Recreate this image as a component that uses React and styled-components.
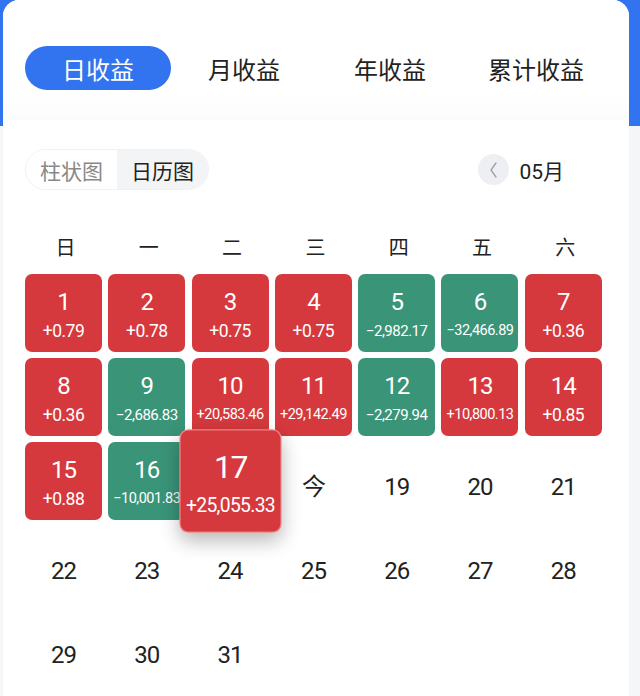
import React from "react";
import styled, { createGlobalStyle, css } from "styled-components";

const GlobalStyle = createGlobalStyle`
  html, body {
    margin: 0;
    padding: 0;
    background: #f5f6f8;
  }
  body {
    font-family: Roboto, "Noto Sans CJK SC", "Noto Sans", sans-serif;
    color: #222;
  }
`;

const Page = styled.div`
  height: 696px;
  overflow: hidden;
  padding: 0 11px 0 3px;
  background: linear-gradient(#3273ef 0, #3273ef 126px, #f5f6f8 126px);
`;

const Card = styled.div`
  min-height: 696px;
  background: #fff;
  border-radius: 16px 16px 0 0;
  overflow: hidden;
`;

const Tabs = styled.div`
  display: grid;
  grid-template-columns: repeat(4, 146px);
  padding: 46px 22px 30px;
  background: linear-gradient(#fff 80%, #fafbfc);
`;

const Tab = styled.div`
  height: 44px;
  border-radius: 22px;
  display: flex;
  align-items: center;
  justify-content: center;
  font-family: "Noto Sans CJK SC", sans-serif;
  font-size: 24px;
  color: #222;
  ${({ $active }) =>
    $active &&
    css`
      background: #3273ef;
      color: #fff;
    `}
`;

const Body = styled.div`
  padding: 29px 0 0 22px;
`;

const Toolbar = styled.div`
  display: flex;
  align-items: center;
  justify-content: space-between;
  width: 580px;
`;

const Toggle = styled.div`
  display: flex;
  height: 41px;
  border-radius: 21px;
  border: 1px solid #f0f1f3;
  overflow: hidden;
  box-sizing: border-box;
`;

const Segment = styled.div`
  display: flex;
  align-items: center;
  padding: 0 14px;
  font-family: "Noto Sans CJK SC", sans-serif;
  font-size: 21px;
  color: ${({ $active }) => ($active ? "#222" : "#888")};
  background: ${({ $active }) => ($active ? "#f3f4f6" : "#fff")};
`;

const MonthNav = styled.div`
  display: flex;
  align-items: center;
  gap: 10px;
`;

const ArrowButton = styled.div`
  width: 31px;
  height: 31px;
  border-radius: 50%;
  background: #eeeff2;
  display: flex;
  align-items: center;
  justify-content: center;
  visibility: ${({ $hidden }) => ($hidden ? "hidden" : "visible")};
`;

const MonthLabel = styled.div`
  font-size: 21px;
  color: #222;
  font-family: Roboto, "Noto Sans CJK SC", sans-serif;
`;

const WeekRow = styled.div`
  display: grid;
  grid-template-columns: repeat(7, 77px);
  column-gap: 6.3px;
  margin-top: 42px;
  height: 30px;
`;

const WeekDay = styled.div`
  text-align: center;
  font-family: "Noto Sans CJK SC", sans-serif;
  font-size: 20px;
  line-height: 30px;
  padding-left: 4px;
`;

const Grid = styled.div`
  display: grid;
  grid-template-columns: repeat(7, 77px);
  grid-auto-rows: 78px;
  gap: 6px 6.3px;
  margin-top: 12px;
`;

const Cell = styled.div`
  position: relative;
  border-radius: 7px;
  display: flex;
  flex-direction: column;
  align-items: center;
  color: #fff;
  white-space: nowrap;
  ${({ $tone }) =>
    $tone === "up" &&
    css`
      background: #d5393d;
    `}
  ${({ $tone }) =>
    $tone === "down" &&
    css`
      background: #3a9478;
    `}
  ${({ $selected }) =>
    $selected &&
    css`
      z-index: 2;
      transform: scale(1.33);
      box-shadow: 0 6px 14px rgba(0, 0, 0, 0.28);
      border: 1px solid rgba(255, 180, 180, 0.6);
      box-sizing: border-box;
    `}
`;

const DayNum = styled.div`
  margin-top: 14px;
  font-size: 24px;
  line-height: 28px;
  letter-spacing: -1px;
`;

const DayValue = styled.div`
  margin-top: 5px;
  font-size: ${({ $size }) => $size}px;
  line-height: 20px;
  letter-spacing: -0.5px;
`;

const PlainDay = styled.div`
  margin-top: 31px;
  font-size: 24px;
  line-height: 28px;
  letter-spacing: -1px;
  color: #222;
  font-family: Roboto, "Noto Sans CJK SC", sans-serif;
`;

const Chevron = ({ dir }) => (
  <svg width="12" height="18" viewBox="0 0 12 18">
    <polyline
      points={dir === "left" ? "8,2 3,9 8,16" : "4,2 9,9 4,16"}
      fill="none"
      stroke="#a0a0a5"
      strokeWidth="1.3"
      strokeLinecap="round"
      strokeLinejoin="round"
    />
  </svg>
);

const days = {
  1: "+0.79",
  2: "+0.78",
  3: "+0.75",
  4: "+0.75",
  5: "−2,982.17",
  6: "−32,466.89",
  7: "+0.36",
  8: "+0.36",
  9: "−2,686.83",
  10: "+20,583.46",
  11: "+29,142.49",
  12: "−2,279.94",
  13: "+10,800.13",
  14: "+0.85",
  15: "+0.88",
  16: "−10,001.83",
  17: "+25,055.33",
};

const weekDays = ["日", "一", "二", "三", "四", "五", "六"];
const tabs = ["日收益", "月收益", "年收益", "累计收益"];

const valueSize = (v) => (v.length <= 6 ? 17.5 : v.length === 9 ? 15 : 14.5);

export default function App() {
  const cells = [];
  for (let d = 1; d <= 31; d++) {
    const v = days[d];
    if (v) {
      cells.push(
        <Cell key={d} $tone={v.startsWith("+") ? "up" : "down"} $selected={d === 17}>
          <DayNum>{d}</DayNum>
          <DayValue $size={valueSize(v)}>{v}</DayValue>
        </Cell>
      );
    } else {
      cells.push(
        <Cell key={d}>
          <PlainDay>{d === 18 ? "今" : d}</PlainDay>
        </Cell>
      );
    }
  }

  return (
    <>
      <GlobalStyle />
      <Page>
        <Card>
          <Tabs>
            {tabs.map((t, i) => (
              <Tab key={t} $active={i === 0}>
                {t}
              </Tab>
            ))}
          </Tabs>
          <Body>
            <Toolbar>
              <Toggle>
                <Segment>柱状图</Segment>
                <Segment $active>日历图</Segment>
              </Toggle>
              <MonthNav>
                <ArrowButton>
                  <Chevron dir="left" />
                </ArrowButton>
                <MonthLabel>05月</MonthLabel>
                <ArrowButton $hidden>
                  <Chevron dir="right" />
                </ArrowButton>
              </MonthNav>
            </Toolbar>
            <WeekRow>
              {weekDays.map((w) => (
                <WeekDay key={w}>{w}</WeekDay>
              ))}
            </WeekRow>
            <Grid>{cells}</Grid>
          </Body>
        </Card>
      </Page>
    </>
  );
}
